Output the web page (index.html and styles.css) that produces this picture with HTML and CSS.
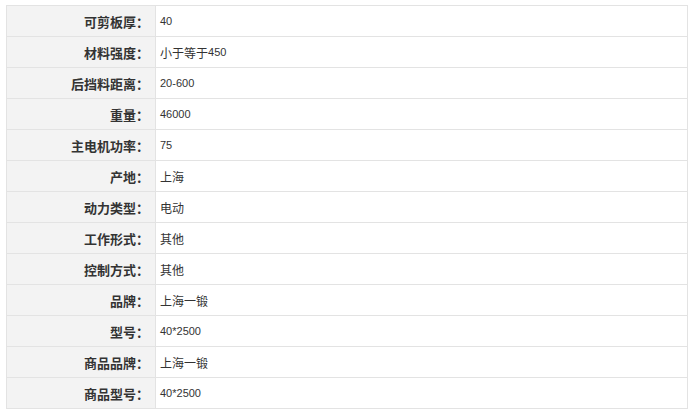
FILE: index.html
```html
<!DOCTYPE html>
<html lang="zh">
<head>
<meta charset="utf-8">
<link rel="stylesheet" href="styles.css">
</head>
<body>
<div class="wrap">
<table class="params">
<tbody>
<tr><th>可剪板厚：</th><td><span class="num">40</span></td></tr>
<tr><th>材料强度：</th><td>小于等于<span class="num">450</span></td></tr>
<tr><th>后挡料距离：</th><td><span class="num">20-600</span></td></tr>
<tr><th>重量：</th><td><span class="num">46000</span></td></tr>
<tr><th>主电机功率：</th><td><span class="num">75</span></td></tr>
<tr><th>产地：</th><td>上海</td></tr>
<tr><th>动力类型：</th><td>电动</td></tr>
<tr><th>工作形式：</th><td>其他</td></tr>
<tr><th>控制方式：</th><td>其他</td></tr>
<tr><th>品牌：</th><td>上海一锻</td></tr>
<tr><th>型号：</th><td><span class="num">40*2500</span></td></tr>
<tr><th>商品品牌：</th><td>上海一锻</td></tr>
<tr><th>商品型号：</th><td><span class="num">40*2500</span></td></tr>
</tbody>
</table>
</div>
</body>
</html>
```
FILE: styles.css
```css
html, body {
  margin: 0;
  padding: 0;
  background: #fff;
}
.wrap {
  padding: 5px 7px 0 6px;
}
.params {
  width: 682px;
  border-collapse: collapse;
  border: 1px solid #dcdcdc;
  font-family: "Noto Sans CJK SC", sans-serif;
}
.params th,
.params td {
  height: 30px;
  padding: 0;
  border: 1px solid #e3e3e3;
  box-sizing: border-box;
}
.params tr {
  height: 31px;
}
.params th {
  width: 149px;
  background: #f3f3f3;
  text-align: right;
  padding-right: 6px;
  font-size: 13px;
  font-weight: bold;
  color: #333;
}
.params td {
  text-align: left;
  padding-left: 4px;
  font-size: 12px;
  color: #333;
}
.num {
  font-family: "Liberation Sans", sans-serif;
  font-size: 11px;
  vertical-align: 2px;
}
```
